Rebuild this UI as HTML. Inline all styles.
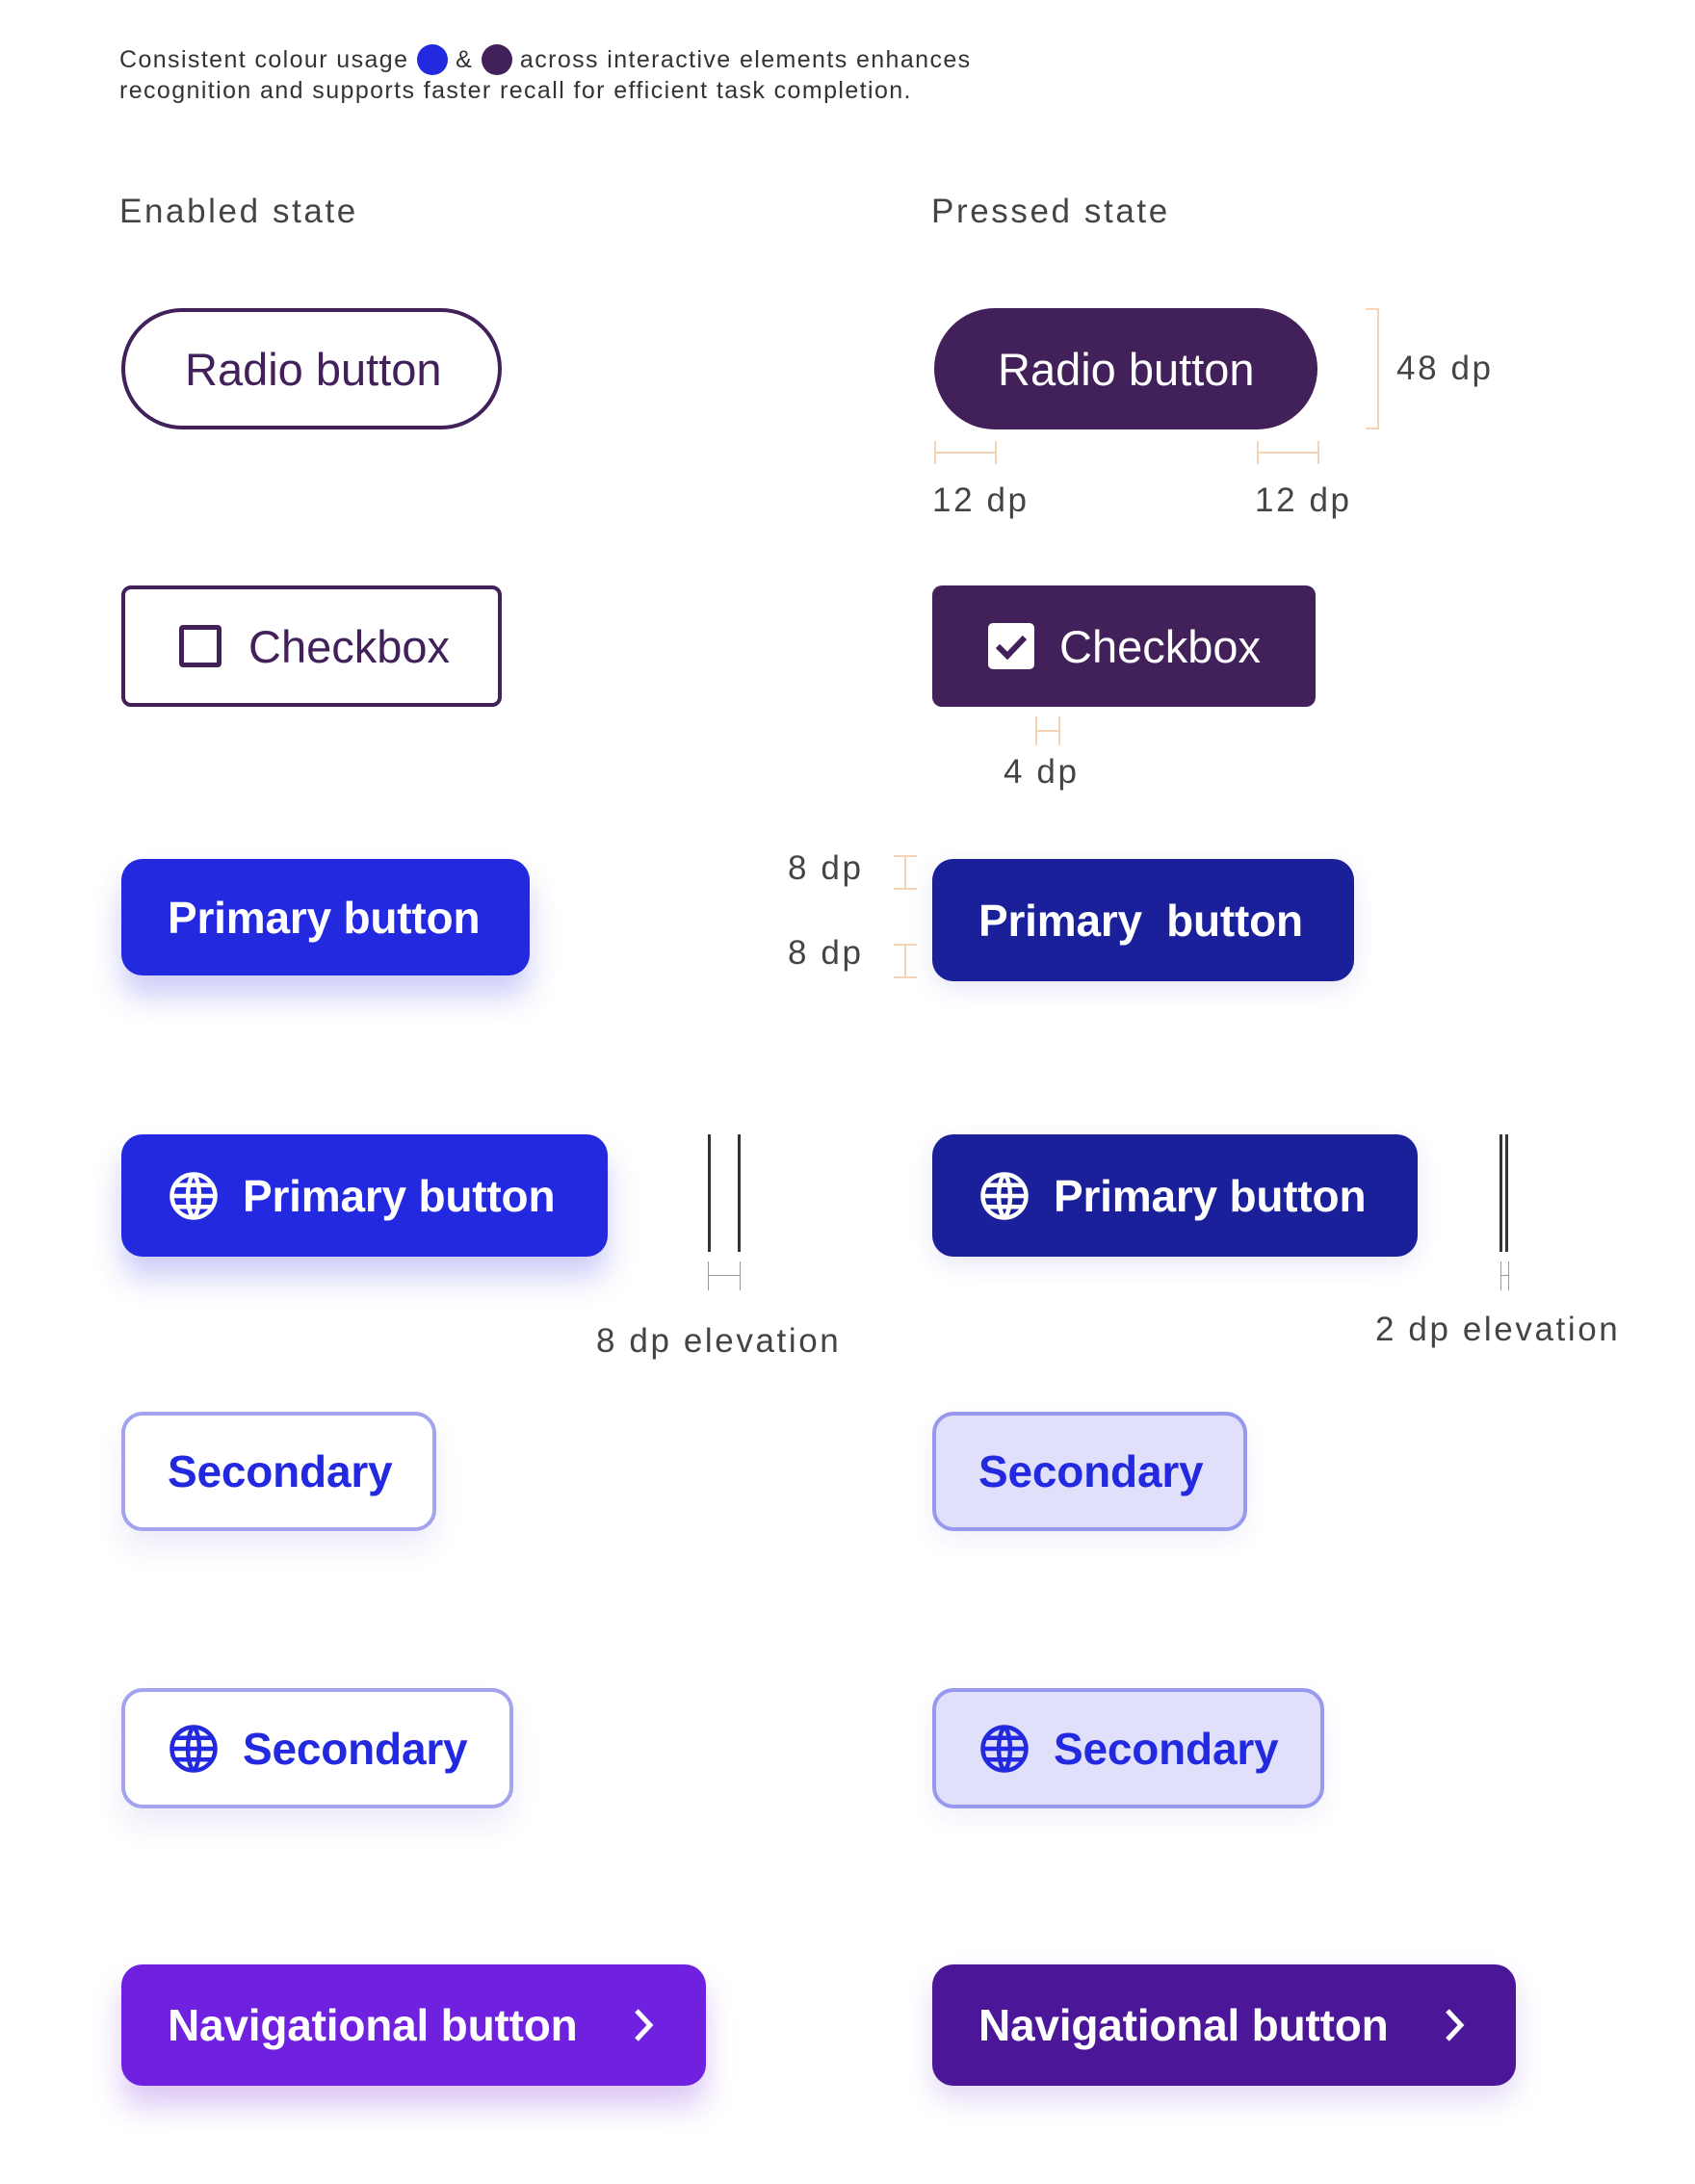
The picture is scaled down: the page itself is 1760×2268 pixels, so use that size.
<!DOCTYPE html>
<html><head><meta charset="utf-8"><style>
*{margin:0;padding:0;box-sizing:border-box}
body{width:1760px;height:2268px;background:#fff;position:relative;font-family:"Liberation Sans",sans-serif;overflow:hidden}
.a{position:absolute}
.lbl{color:#444;font-size:35px;letter-spacing:2.6px;white-space:nowrap}
.btn{position:absolute;display:flex;align-items:center;font-size:47px;white-space:nowrap;height:126px}
.b{font-size:46px;letter-spacing:-0.2px}
.radio{border:4px solid #42215a;border-radius:64px;color:#42215a;padding-left:62px}
.radioP{background:#42215a;border-radius:64px;color:#fff;padding-left:66px}
.cb{border:4px solid #42215a;border-radius:10px;color:#42215a;padding-left:56px}
.cbP{background:#42215a;border-radius:10px;color:#fff;padding-left:58px}
.pri{background:#2229de;color:#fff;border-radius:22px;font-weight:bold;padding-left:48px;box-shadow:0 22px 30px rgba(60,60,230,.25)}
.priP{background:#1a1f9a;color:#fff;border-radius:22px;font-weight:bold;padding-left:48px;box-shadow:0 8px 24px rgba(60,60,200,.12)}
.sec{border:4px solid #a3a3f0;background:#fff;color:#2229de;border-radius:22px;font-weight:bold;padding-left:44px;box-shadow:0 18px 28px rgba(80,80,200,.1)}
.secP{border:4px solid #9898ee;background:#e0e0fa;color:#2229de;border-radius:22px;font-weight:bold;padding-left:44px;box-shadow:0 10px 24px rgba(80,80,200,.08)}
.nav{background:#7021e0;color:#fff;border-radius:22px;font-weight:bold;padding-left:48px;box-shadow:0 22px 30px rgba(120,40,220,.25)}
.navP{background:#4b1798;color:#fff;border-radius:22px;font-weight:bold;padding-left:48px;box-shadow:0 14px 28px rgba(100,40,200,.18)}
.or{position:absolute;background:#f5d3b5}
svg{flex:none}
</style></head><body>
<div class="a" style="left:124px;top:46px;font-size:25px;line-height:32px;color:#333;letter-spacing:1.4px;white-space:nowrap">Consistent colour usage <span style="display:inline-block;width:32px;height:32px;border-radius:50%;background:#2229de;vertical-align:-8px"></span> &amp; <span style="display:inline-block;width:32px;height:32px;border-radius:50%;background:#42215a;vertical-align:-8px"></span> across interactive elements enhances<br>recognition and supports faster recall for efficient task completion.</div>

<div class="a lbl" style="left:124px;top:200px">Enabled state</div>
<div class="a lbl" style="left:967px;top:200px">Pressed state</div>

<div class="btn radio" style="left:126px;top:320px;width:395px">Radio button</div>
<div class="btn radioP" style="left:970px;top:320px;width:398px">Radio button</div>
<div class="or" style="left:1430px;top:320px;width:2px;height:126px"></div>
<div class="or" style="left:1418px;top:320px;width:14px;height:2px"></div>
<div class="or" style="left:1418px;top:444px;width:14px;height:2px"></div>
<div class="a lbl" style="left:1450px;top:363px">48 dp</div>
<div class="or" style="left:970px;top:458px;width:2px;height:24px"></div>
<div class="or" style="left:1033px;top:458px;width:2px;height:24px"></div>
<div class="or" style="left:970px;top:469px;width:64px;height:2px"></div>
<div class="or" style="left:1305px;top:458px;width:2px;height:24px"></div>
<div class="or" style="left:1368px;top:458px;width:2px;height:24px"></div>
<div class="or" style="left:1305px;top:469px;width:64px;height:2px"></div>
<div class="a lbl" style="left:968px;top:500px">12 dp</div>
<div class="a lbl" style="left:1303px;top:500px">12 dp</div>

<div class="btn cb" style="left:126px;top:608px;width:395px"><span style="display:inline-block;width:44px;height:44px;border:5px solid #42215a;border-radius:4px;margin-right:28px"></span>Checkbox</div>
<div class="btn cbP" style="left:968px;top:608px;width:398px"><svg width="48" height="48" viewBox="0 0 48 48" style="margin-right:26px"><rect width="48" height="48" rx="5" fill="#fff"/><path d="M10 24 L20 34 L38 15" stroke="#42215a" stroke-width="6" fill="none"/></svg>Checkbox</div>
<div class="or" style="left:1075px;top:744px;width:2px;height:30px"></div>
<div class="or" style="left:1099px;top:744px;width:2px;height:30px"></div>
<div class="or" style="left:1075px;top:758px;width:26px;height:2px"></div>
<div class="a lbl" style="left:1042px;top:782px">4 dp</div>

<div class="btn pri b" style="left:126px;top:892px;width:424px;height:121px">Primary button</div>
<div class="btn priP b" style="left:968px;top:892px;width:438px;height:127px">Primary&nbsp; button</div>
<div class="a lbl" style="left:818px;top:882px">8 dp</div>
<div class="a lbl" style="left:818px;top:970px">8 dp</div>
<div class="or" style="left:939px;top:888px;width:2px;height:36px"></div>
<div class="or" style="left:928px;top:888px;width:24px;height:2px"></div>
<div class="or" style="left:928px;top:922px;width:24px;height:2px"></div>
<div class="or" style="left:939px;top:980px;width:2px;height:36px"></div>
<div class="or" style="left:928px;top:980px;width:24px;height:2px"></div>
<div class="or" style="left:928px;top:1014px;width:24px;height:2px"></div>

<div class="btn pri b" style="left:126px;top:1178px;width:505px;height:127px;padding-left:48px"><svg width="54" height="54" viewBox="0 0 24 24" style="margin-right:24px" fill="none" stroke="#fff" stroke-width="2"><circle cx="12" cy="12" r="10"/><path d="M2 12h20M3.5 7h17M3.5 17h17M12 2c-3.5 3-3.5 17 0 20M12 2c3.5 3 3.5 17 0 20"/></svg>Primary button</div>
<div class="btn priP b" style="left:968px;top:1178px;width:504px;height:127px;padding-left:48px"><svg width="54" height="54" viewBox="0 0 24 24" style="margin-right:24px" fill="none" stroke="#fff" stroke-width="2"><circle cx="12" cy="12" r="10"/><path d="M2 12h20M3.5 7h17M3.5 17h17M12 2c-3.5 3-3.5 17 0 20M12 2c3.5 3 3.5 17 0 20"/></svg>Primary button</div>
<div class="a" style="left:735px;top:1178px;width:3px;height:122px;background:#333"></div>
<div class="a" style="left:766px;top:1178px;width:3px;height:122px;background:#333"></div>
<div class="a" style="left:735px;top:1310px;width:1px;height:30px;background:#999"></div>
<div class="a" style="left:768px;top:1310px;width:1px;height:30px;background:#999"></div>
<div class="a" style="left:735px;top:1324px;width:34px;height:1px;background:#999"></div>
<div class="a lbl" style="left:619px;top:1373px">8 dp elevation</div>
<div class="a" style="left:1557px;top:1178px;width:3px;height:122px;background:#333"></div>
<div class="a" style="left:1563px;top:1178px;width:3px;height:122px;background:#333"></div>
<div class="a" style="left:1558px;top:1310px;width:1px;height:30px;background:#999"></div>
<div class="a" style="left:1566px;top:1310px;width:1px;height:30px;background:#999"></div>
<div class="a" style="left:1558px;top:1324px;width:9px;height:1px;background:#999"></div>
<div class="a lbl" style="left:1428px;top:1361px">2 dp elevation</div>

<div class="btn sec b" style="left:126px;top:1466px;width:327px;height:124px">Secondary</div>
<div class="btn secP b" style="left:968px;top:1466px;width:327px;height:124px">Secondary</div>

<div class="btn sec b" style="left:126px;top:1753px;width:407px;height:125px"><svg width="54" height="54" viewBox="0 0 24 24" style="margin-right:24px" fill="none" stroke="#2229de" stroke-width="2"><circle cx="12" cy="12" r="10"/><path d="M2 12h20M3.5 7h17M3.5 17h17M12 2c-3.5 3-3.5 17 0 20M12 2c3.5 3 3.5 17 0 20"/></svg>Secondary</div>
<div class="btn secP b" style="left:968px;top:1753px;width:407px;height:125px"><svg width="54" height="54" viewBox="0 0 24 24" style="margin-right:24px" fill="none" stroke="#2229de" stroke-width="2"><circle cx="12" cy="12" r="10"/><path d="M2 12h20M3.5 7h17M3.5 17h17M12 2c-3.5 3-3.5 17 0 20M12 2c3.5 3 3.5 17 0 20"/></svg>Secondary</div>

<div class="btn nav b" style="left:126px;top:2040px;width:607px;height:126px">Navigational button<svg width="24" height="40" viewBox="0 0 24 40" style="margin-left:56px" fill="none" stroke="#fff" stroke-width="5"><path d="M5 5l14 15-14 15"/></svg></div>
<div class="btn navP b" style="left:968px;top:2040px;width:606px;height:126px">Navigational button<svg width="24" height="40" viewBox="0 0 24 40" style="margin-left:56px" fill="none" stroke="#fff" stroke-width="5"><path d="M5 5l14 15-14 15"/></svg></div>
</body></html>
